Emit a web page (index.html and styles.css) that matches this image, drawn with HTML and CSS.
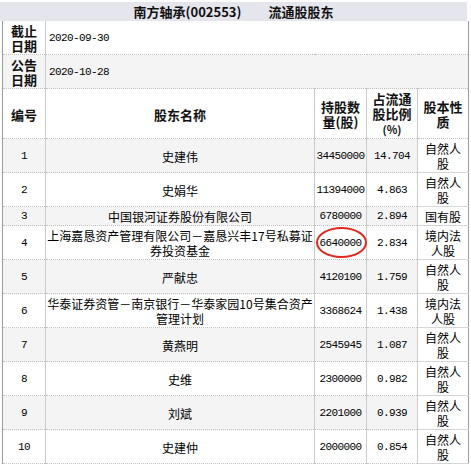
FILE: index.html
```html
<!DOCTYPE html>
<html lang="zh-CN">
<head>
<meta charset="utf-8">
<title>南方轴承(002553) 流通股股东</title>
<link rel="stylesheet" href="styles.css">
</head>
<body>
<div class="title">南方轴承(002553)<span class="gap"></span>流通股股东</div>
<table class="holders">
  <colgroup>
    <col class="c-no"><col class="c-name"><col class="c-qty"><col class="c-pct"><col class="c-type">
  </colgroup>
  <tr class="meta">
    <th class="label">截止<br>日期</th>
    <td class="date" colspan="4">2020-09-30</td>
  </tr>
  <tr class="meta alt">
    <th class="label">公告<br>日期</th>
    <td class="date" colspan="4">2020-10-28</td>
  </tr>
  <tr class="head">
    <th>编号</th>
    <th>股东名称</th>
    <th>持股数<br>量(股)</th>
    <th>占流通<br>股比例<br><span class="pc">(%)</span></th>
    <th class="type">股本性<br>质</th>
  </tr>
  <tr class="alt">
    <td class="num">1</td><td>史建伟</td><td class="num">34450000</td><td class="num">14.704</td><td class="type">自然人<br>股</td>
  </tr>
  <tr>
    <td class="num">2</td><td>史娟华</td><td class="num">11394000</td><td class="num">4.863</td><td class="type">自然人<br>股</td>
  </tr>
  <tr class="alt">
    <td class="num">3</td><td>中国银河证券股份有限公司</td><td class="num">6780000</td><td class="num">2.894</td><td class="type">国有股</td>
  </tr>
  <tr>
    <td class="num">4</td><td class="name"><span class="line">上海嘉恳资产管理有限公司－嘉恳兴丰17号私募证</span><span class="line">券投资基金</span></td><td class="num mark">6640000<span class="ring"></span></td><td class="num">2.834</td><td class="type">境内法<br>人股</td>
  </tr>
  <tr class="alt">
    <td class="num">5</td><td>严献忠</td><td class="num">4120100</td><td class="num">1.759</td><td class="type">自然人<br>股</td>
  </tr>
  <tr>
    <td class="num">6</td><td class="name"><span class="line">华泰证券资管－南京银行－华泰家园10号集合资产</span><span class="line">管理计划</span></td><td class="num">3368624</td><td class="num">1.438</td><td class="type">境内法<br>人股</td>
  </tr>
  <tr class="alt">
    <td class="num">7</td><td>黄燕明</td><td class="num">2545945</td><td class="num">1.087</td><td class="type">自然人<br>股</td>
  </tr>
  <tr>
    <td class="num">8</td><td>史维</td><td class="num">2300000</td><td class="num">0.982</td><td class="type">自然人<br>股</td>
  </tr>
  <tr class="alt">
    <td class="num">9</td><td>刘斌</td><td class="num">2201000</td><td class="num">0.939</td><td class="type">自然人<br>股</td>
  </tr>
  <tr>
    <td class="num">10</td><td>史建仲</td><td class="num">2000000</td><td class="num">0.854</td><td class="type">自然人<br>股</td>
  </tr>
</table>
</body>
</html>
```

FILE: styles.css
```css
html, body {
  margin: 0;
  padding: 0;
  background: #ffffff;
}

body {
  font-family: "Noto Sans CJK SC", "Noto Sans", sans-serif;
  font-size: 12px;
  color: #000000;
}

.title {
  width: 467px;
  margin-top: 2px;
  height: 19px;
  line-height: 19px;
  background: #e5e5ed;
  text-align: center;
  font-weight: bold;
  font-size: 13px;
  color: #111111;
}

.title .gap {
  display: inline-block;
  width: 27px;
}

.holders {
  margin-left: 2px;
  width: 466px;
  border-collapse: collapse;
  table-layout: fixed;
}

.c-no { width: 43px; }
.c-name { width: 269px; }
.c-qty { width: 52px; }
.c-pct { width: 51px; }
.c-type { width: 51px; }

.holders th,
.holders td {
  padding: 2px 0 1px;
  line-height: 15px;
  text-align: center;
  vertical-align: middle;
  border-left: 1px solid #cbcbcb;
  border-bottom: 1px dotted #c2c2c2;
  background: #ffffff;
  overflow: visible;
}

.holders tr > :first-child {
  border-left: 1px solid #9c9c9c;
}

.holders tr > :last-child {
  border-right: 1px solid #9c9c9c;
}

.holders th {
  font-weight: bold;
  font-size: 13px;
  color: #111111;
}

.holders .alt th,
.holders .alt td {
  background: #f4f4f4;
}

.holders .alt td.type {
  background: #ffffff;
}

.holders td.type {
  border-bottom: 1px solid #d6d6d6;
}

.holders .date {
  text-align: left;
  padding-left: 3px;
  font-family: "Liberation Mono", monospace;
  font-size: 11px;
  letter-spacing: -0.6px;
}

.holders .num {
  font-family: "Liberation Mono", monospace;
  font-size: 11px;
  letter-spacing: -0.6px;
}

.holders .name {
  padding-left: 1px;
  padding-right: 1px;
}

.holders .name .line {
  display: block;
  white-space: nowrap;
}

.pc {
  font-size: 11px;
}

.holders td.mark {
  position: relative;
}

.ring {
  position: absolute;
  left: 1px;
  top: 1px;
  right: -1px;
  bottom: 1px;
  border: 2px solid #e0281e;
  border-radius: 50%;
  box-sizing: border-box;
}
```
